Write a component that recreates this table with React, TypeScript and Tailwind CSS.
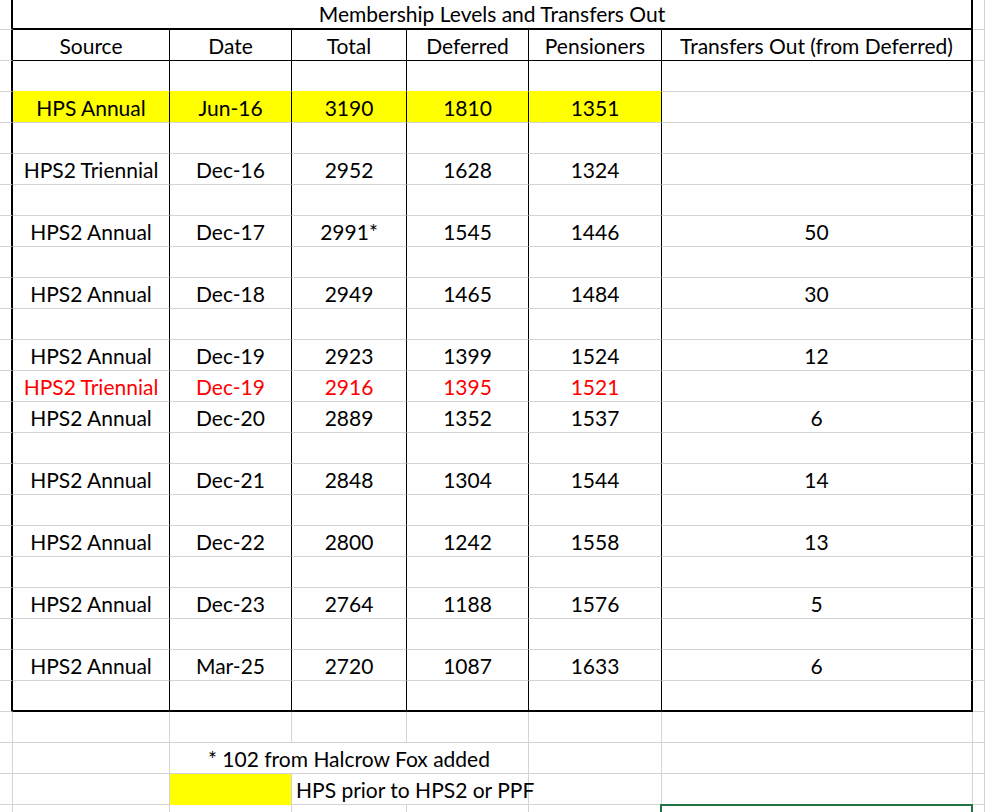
import React from "react";

type Cell = {
  key: string;
  cls: string;
  content?: React.ReactNode;
  sel?: boolean;
};

const R = {
  g: "border-r border-r-[#d4d4d4]",
  k: "border-r border-r-black",
  K: "border-r-2 border-r-black",
};
const B = {
  g: "border-b border-b-[#d4d4d4]",
  k: "border-b border-b-black",
  K: "border-b-2 border-b-black",
  y: "border-b border-b-[#ffff00]",
  t: "border-b border-b-transparent",
};

const data: Record<number, { v: string[]; red?: boolean; yellow?: boolean }> = {
  3: { v: ["HPS Annual", "Jun-16", "3190", "1810", "1351", ""], yellow: true },
  5: { v: ["HPS2 Triennial", "Dec-16", "2952", "1628", "1324", ""] },
  7: { v: ["HPS2 Annual", "Dec-17", "2991*", "1545", "1446", "50"] },
  9: { v: ["HPS2 Annual", "Dec-18", "2949", "1465", "1484", "30"] },
  11: { v: ["HPS2 Annual", "Dec-19", "2923", "1399", "1524", "12"] },
  12: { v: ["HPS2 Triennial", "Dec-19", "2916", "1395", "1521", ""], red: true },
  13: { v: ["HPS2 Annual", "Dec-20", "2889", "1352", "1537", "6"] },
  15: { v: ["HPS2 Annual", "Dec-21", "2848", "1304", "1544", "14"] },
  17: { v: ["HPS2 Annual", "Dec-22", "2800", "1242", "1558", "13"] },
  19: { v: ["HPS2 Annual", "Dec-23", "2764", "1188", "1576", "5"] },
  21: { v: ["HPS2 Annual", "Mar-25", "2720", "1087", "1633", "6"] },
};

const headers = ["Source", "Date", "Total", "Deferred", "Pensioners", "Transfers Out (from Deferred)"];

const center = "flex items-center justify-center whitespace-nowrap";

function buildCells(): Cell[] {
  const cells: Cell[] = [];
  // Row 0: title
  cells.push({ key: "0-0", cls: `${R.K} ${B.g}` });
  cells.push({
    key: "0-t",
    cls: `col-span-6 ${R.K} ${B.K} ${center} pb-[1px]`,
    content: "Membership Levels and Transfers Out",
  });
  cells.push({ key: "0-7", cls: `${R.g} ${B.g}` });

  // Row 1: headers
  cells.push({ key: "1-0", cls: `${R.K} ${B.g}` });
  headers.forEach((h, i) => {
    cells.push({
      key: `1-${i + 1}`,
      cls: `${i === 5 ? R.K : R.k} ${B.k} ${center}`,
      content: h,
    });
  });
  cells.push({ key: "1-7", cls: `${R.g} ${B.g}` });

  // Rows 2..22 table body
  for (let r = 2; r <= 22; r++) {
    const d = data[r];
    cells.push({ key: `${r}-0`, cls: `${R.K} ${B.g}` });
    for (let c = 1; c <= 6; c++) {
      let bottom = B.g;
      if (r === 22) bottom = B.K;
      else if (r === 2 && c <= 5) bottom = B.y;
      const right = c === 6 ? R.K : R.k;
      const bg = d?.yellow && c <= 5 ? "bg-[#ffff00]" : "";
      const color = d?.red ? "text-[#ff0000]" : "text-black";
      cells.push({
        key: `${r}-${c}`,
        cls: `${right} ${bottom} ${bg} ${color} ${center}`,
        content: d ? d.v[c - 1] : "",
      });
    }
    cells.push({ key: `${r}-7`, cls: `${R.g} ${B.g}` });
  }

  // Row 23: empty
  for (let c = 0; c <= 7; c++) {
    cells.push({ key: `23-${c}`, cls: `${R.g} ${B.g}` });
  }

  // Row 24: footnote merged over Date..Deferred
  cells.push({ key: "24-0", cls: `${R.g} ${B.g}` });
  cells.push({ key: "24-1", cls: `${R.g} ${B.g}` });
  cells.push({
    key: "24-n",
    cls: `col-span-3 ${R.g} ${B.g} ${center}`,
    content: "* 102 from Halcrow Fox added",
  });
  cells.push({ key: "24-5", cls: `${R.g} ${B.g}` });
  cells.push({ key: "24-6", cls: `${R.g} ${B.g}` });
  cells.push({ key: "24-7", cls: `${R.g} ${B.g}` });

  // Row 25: legend
  cells.push({ key: "25-0", cls: `${R.g} ${B.g}` });
  cells.push({ key: "25-1", cls: `${R.g} ${B.g}` });
  cells.push({ key: "25-2", cls: `${R.g} ${B.t} bg-[#ffff00]` });
  cells.push({
    key: "25-l",
    cls: `col-span-2 ${R.g} ${B.g} flex items-center justify-start pl-[4px] whitespace-nowrap`,
    content: "HPS prior to HPS2 or PPF",
  });
  cells.push({ key: "25-5", cls: `${R.g} ${B.g}` });
  cells.push({ key: "25-6", cls: `${R.g} ${B.g}` });
  cells.push({ key: "25-7", cls: `${R.g} ${B.g}` });

  // Row 26: partial
  for (let c = 0; c <= 7; c++) {
    cells.push({ key: `26-${c}`, cls: `${R.g}`, sel: c === 6 });
  }
  return cells;
}

export default function App() {
  const cells = buildCells();
  return (
    <div className="w-[985px] h-[812px] overflow-hidden bg-white text-black font-['Lato',sans-serif] text-[21px] leading-none">
      <div className="grid grid-cols-[13px_157px_122px_115px_122px_133px_311px_12px] grid-rows-[30px_repeat(25,31px)_7px]">
        {cells.map((c) => (
          <div key={c.key} className={`relative min-w-0 ${c.cls}`}>
            {c.content}
            {c.sel && (
              <div className="absolute left-[-2px] top-[-1px] right-[-1px] h-[12px] border-2 border-[#217346]" />
            )}
          </div>
        ))}
      </div>
    </div>
  );
}
